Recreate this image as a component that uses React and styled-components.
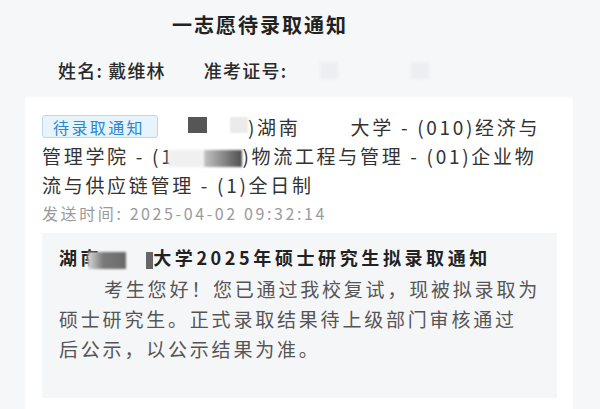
import React from 'react';
import styled, { createGlobalStyle } from 'styled-components';

const GlobalStyle = createGlobalStyle`
  html, body {
    margin: 0;
    padding: 0;
    background: #f6f7f9;
    overflow: hidden;
  }
  body {
    font-family: "Noto Sans CJK SC", "Noto Sans", sans-serif;
  }
`;

const Page = styled.div`
  width: 600px;
  height: 409px;
  overflow: hidden;
  background: #f6f7f9;
`;

const Title = styled.h1`
  margin: 0;
  padding: 12px 80px 0 0;
  text-align: center;
  font-size: 20px;
  line-height: 26px;
  font-weight: 700;
  letter-spacing: 2px;
  color: #222;
`;

const InfoRow = styled.div`
  display: flex;
  align-items: center;
  gap: 38px;
  margin-top: 20px;
  padding-left: 58px;
  height: 24px;
  font-size: 18px;
  letter-spacing: 1.2px;
  color: #2a2a2a;
  font-weight: 500;
`;

const InfoItem = styled.span`
  display: flex;
  align-items: center;
  white-space: nowrap;
`;

const Hidden = styled.span`
  display: flex;
  gap: 73px;
  margin-left: 33px;
`;

// blurred redaction patch over private text
const Mask = styled.span`
  display: inline-block;
  vertical-align: ${p => p.$va || 'middle'};
  width: ${p => p.$w}px;
  height: ${p => p.$h || 16}px;
  margin-left: ${p => p.$ml || 0}px;
  margin-right: ${p => p.$mr || 0}px;
  background: ${p => p.$bg};
  filter: blur(${p => (p.$blur ?? 1)}px);
`;

const Card = styled.div`
  margin: 15px 27px 0 25px;
  background: #fff;
  border-radius: 4px;
  padding: 15px 16px 24px 17px;
`;

const Lines = styled.div`
  font-size: 19px;
  line-height: 29px;
  letter-spacing: 2.7px;
  color: #333;
  white-space: nowrap;
`;

const Badge = styled.span`
  display: inline-block;
  vertical-align: top;
  margin-top: 3px;
  height: 23px;
  line-height: 23px;
  padding: 0 8px 0 10px;
  width: 116px;
  box-sizing: border-box;
  font-size: 16px;
  letter-spacing: 2.4px;
  color: #2c86cc;
  background: #e7f4fc;
  border: 1px solid #b3daf2;
  border-radius: 3px;
  margin-right: 30px;
`;

const SendTime = styled.div`
  font-size: 16px;
  line-height: 29px;
  letter-spacing: 2.6px;
  color: #9a9a9a;
`;

const NoticeBox = styled.div`
  margin-top: 5px;
  background: #f5f6f8;
  padding: 11px 17px 34px 17px;
`;

const NoticeTitle = styled.div`
  font-size: 18px;
  line-height: 26px;
  font-weight: 700;
  letter-spacing: 3.6px;
  color: #222;
  white-space: nowrap;
`;

const NoticeBody = styled.p`
  margin: 4px 0 0;
  font-size: 19px;
  line-height: 30px;
  letter-spacing: 2.8px;
  color: #555;
  white-space: nowrap;
`;

const BodyLine = styled.span`
  display: block;
  padding-left: ${p => (p.$indent ? 45 : 0)}px;
`;

export default function App() {
  return (
    <Page>
      <GlobalStyle />
      <Title>一志愿待录取通知</Title>
      <InfoRow>
        <InfoItem>姓名: 戴维林</InfoItem>
        <InfoItem>
          准考证号:
          <Hidden>
            <Mask $w={18} $h={17} $bg="#eceef1" $blur={1.5} />
            <Mask $w={18} $h={17} $bg="#eceef1" $blur={1.5} />
          </Hidden>
        </InfoItem>
      </InfoRow>
      <Card>
        <Lines>
          <Badge>待录取通知</Badge>
          <Mask $w={19} $h={16} $bg="#565656" $va="2px" $mr={23} $blur={0.6} />
          <Mask $w={18} $h={16} $bg="#ebebeb" $va="2px" $blur={1} />
          )湖南
          <Mask $w={50} $h={4} $bg="transparent" />
          大学 - (010)经济与
          <br />
          管理学院 - (1
          <Mask $w={36} $h={17} $bg="#f0f0f0" $ml={-6} $blur={1.5} />
          <Mask $w={38} $h={17} $bg="linear-gradient(90deg, #c4c4c4, #4f4f4f)" $blur={1} />
          )物流工程与管理 - (01)企业物
          <br />
          流与供应链管理 - (1)全日制
        </Lines>
        <SendTime>发送时间: 2025-04-02 09:32:14</SendTime>
        <NoticeBox>
          <NoticeTitle>
            湖南
            <Mask $w={38} $h={17} $bg="linear-gradient(90deg, #d8d8d8, #7a7a7a 40%, #6a6a6a)" $ml={-14} $blur={0.8} />
            <Mask $w={20} $h={4} $bg="transparent" />
            <Mask $w={7} $h={17} $bg="#666" $blur={0.6} />
            大学2025年硕士研究生拟录取通知
          </NoticeTitle>
          <NoticeBody>
            <BodyLine $indent>考生您好！您已通过我校复试，现被拟录取为</BodyLine>
            <BodyLine>硕士研究生。正式录取结果待上级部门审核通过</BodyLine>
            <BodyLine>后公示，以公示结果为准。</BodyLine>
          </NoticeBody>
        </NoticeBox>
      </Card>
    </Page>
  );
}
